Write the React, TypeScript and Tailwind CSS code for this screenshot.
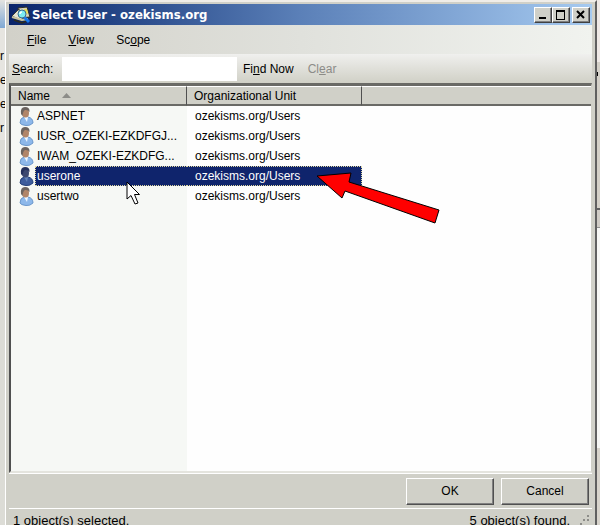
import type { ReactNode } from 'react';

interface DirectoryObject {
  name: string;
  unit: string;
}

const objects: DirectoryObject[] = [
  { name: 'ASPNET', unit: 'ozekisms.org/Users' },
  { name: 'IUSR_OZEKI-EZKDFGJ...', unit: 'ozekisms.org/Users' },
  { name: 'IWAM_OZEKI-EZKDFG...', unit: 'ozekisms.org/Users' },
  { name: 'userone', unit: 'ozekisms.org/Users' },
  { name: 'usertwo', unit: 'ozekisms.org/Users' },
];

const selected = 'userone';

function DirectoryIcon() {
  return (
    <svg width="20" height="18" viewBox="0 0 20 18" aria-hidden="true">
      <path d="M7 2 L16 1 L19 11 L8 12 Z" fill="#d6d4bc" stroke="#2c2c24" />
      <path d="M13 3 L16 3 L17 8 L14 7 Z" fill="#e8dc50" />
      <path d="M1 10 L8 3 L9 11 L13 13 L11 15 Z" fill="#e4e4d4" stroke="#3c3c34" />
      <path d="M1 11 L11 14 L17 13" stroke="#c8c4a0" strokeWidth="2" fill="none" />
      <path d="M3 14 L11 17 L16 15" stroke="#2c2c20" strokeWidth="1.5" fill="none" />
      <path d="M13 11 L18 16" stroke="#1878f0" strokeWidth="3" />
      <circle cx="11" cy="8" r="4" fill="#7cecf4" stroke="#3a6c90" />
      <path d="M9 8 Q9 6 11 6" stroke="#fff" strokeWidth="1.5" fill="none" />
    </svg>
  );
}

function UserIcon({ dark }: { dark: boolean }) {
  return (
    <svg width="16" height="19" viewBox="0 0 16 19" aria-hidden="true" className="shrink-0">
      <path
        d="M1 16 Q1 11 5 10 L9 10 Q14 11 14 16 Q11 19 7 18.500 Q2 18 1 16 Z"
        fill={dark ? '#3d5c9c' : '#8db8ea'}
        stroke={dark ? '#24407c' : '#6c98cc'}
      />
      <path d="M5 10 L8 15 L9 10 Z" fill={dark ? '#6484b8' : '#eef6ff'} />
      <ellipse cx="6.5" cy="6" rx="3.5" ry="4.5" fill={dark ? '#3c4870' : '#b08468'} />
      <path
        d="M2 7 Q1 0 6 0 Q11 0 10.500 5 Q9 2.500 6 3 Q4 4 3.500 9 Z"
        fill={dark ? '#24305c' : '#6c6460'}
      />
    </svg>
  );
}

function CaptionButton({ label, children }: { label: string; children: ReactNode }) {
  return (
    <button
      type="button"
      aria-label={label}
      className="flex h-4 w-[18px] items-center justify-center border border-t-white border-r-[#404040] border-b-[#404040] border-l-white bg-[#d0d0c8] shadow-[inset_-1px_-1px_0_#808080]"
    >
      <svg width="12" height="12" viewBox="0 0 12 12" fill="none" stroke="#000" shapeRendering="crispEdges">
        {children}
      </svg>
    </button>
  );
}

function DialogButton({ children }: { children: ReactNode }) {
  return (
    <button
      type="button"
      className="h-[27px] w-[88px] border border-t-white border-r-[#505050] border-b-[#505050] border-l-white bg-[#d0d0c8] shadow-[inset_-1px_-1px_0_#808080]"
    >
      {children}
    </button>
  );
}

function BackgroundLeft() {
  return (
    <div className="w-[5px] shrink-0 overflow-hidden bg-[#dcdcd6]" aria-hidden="true">
      <div className="h-7 bg-linear-to-b from-[#e4e4e0] to-[#7fa8d4]" />
      <div className="flex flex-col bg-[#e6e5e0] pt-4 leading-6">
        <span>r</span>
        <span>e</span>
        <span>e</span>
        <span>r</span>
      </div>
    </div>
  );
}

function BackgroundRight() {
  return (
    <div className="flex w-[3px] shrink-0 flex-col bg-[#f6f6f4]" aria-hidden="true">
      <div className="h-[62px] bg-[#efe9e6]" />
      <div className="h-[146px] bg-[#d4d0c8] pt-2.5">
        <div className="h-1 w-px bg-black" />
      </div>
      <div className="h-5 border-t-2 border-b border-t-[#606060] border-b-[#909090] bg-[#d0ccc6]" />
      <div className="flex-1" />
      <div className="h-[77px] bg-[#d8d4cc]" />
    </div>
  );
}

export default function App() {
  return (
    <div className="flex h-screen overflow-hidden bg-[#d0d0c8] font-['Liberation_Sans',sans-serif] text-xs text-black">
      <BackgroundLeft />
      <main className="relative flex min-w-0 flex-1 flex-col border-t-2 border-r-2 border-l border-t-[#f0ede8] border-r-[#606060] border-l-white bg-[#d0d0c8] pt-0.5 pr-[3px] pl-[3px]">
        <header className="flex h-[21px] shrink-0 items-center bg-linear-to-r from-[#0a246a] via-[#5b80b8] to-[#a6caf0] pr-0.5 pl-0.5">
          <DirectoryIcon />
          <h1 className="flex-1 pl-px font-['DejaVu_Sans_Condensed','DejaVu_Sans',sans-serif] text-[13px] font-bold text-white">
            Select User - ozekisms.org
          </h1>
          <div className="flex">
            <CaptionButton label="Minimize">
              <path d="M2 9h7" strokeWidth="2" />
            </CaptionButton>
            <CaptionButton label="Maximize">
              <path d="M1.500 1v9.500h8V1" />
              <path d="M1 2h9" strokeWidth="2" />
            </CaptionButton>
          </div>
          <div className="pl-0.5">
            <CaptionButton label="Close">
              <path d="M2 2l7 7M9 2l-7 7" strokeWidth="2" shapeRendering="auto" />
            </CaptionButton>
          </div>
        </header>

        <nav className="flex h-[29px] shrink-0 items-center gap-[22px] bg-linear-to-r from-[#d2d1c9] via-[#e0e1dc] to-[#f1f3ef] pl-[18px]">
          <button type="button"><u>F</u>ile</button>
          <button type="button"><u>V</u>iew</button>
          <button type="button">Sc<u>o</u>pe</button>
        </nav>

        <form className="flex h-[29px] shrink-0 items-center bg-linear-to-b from-[#f0f0ee] to-[#d0d0c6] pl-[3px]">
          <label htmlFor="search" className="w-[50px]"><u>S</u>earch:</label>
          <input id="search" type="text" className="h-6 w-[175px] bg-white px-1 outline-none" />
          <button type="button" className="ml-1.5">Fi<u>n</u>d Now</button>
          <button type="button" disabled className="ml-3.5 text-[#8c8c88]">Cl<u>e</u>ar</button>
        </form>

        <section className="min-h-0 flex-1 border-t-[3px] border-r border-b-2 border-l-2 border-t-[#6a6a66] border-r-[#d0d0c8] border-b-[#e4e4de] border-l-[#505050] bg-[linear-gradient(to_right,#f6f8f5_176px,#fefefe_176px)]">
          <table className="w-full table-fixed border-separate border-spacing-0 text-left">
            <colgroup>
              <col className="w-[176px]" />
              <col className="w-[175px]" />
              <col />
            </colgroup>
            <thead>
              <tr className="h-5 bg-[#d0d0c8]">
                <th className="border-t border-r border-b-2 border-t-white border-r-[#505050] border-b-[#6a6a66] p-0 pl-[7px] font-normal">
                  <span className="flex items-center gap-3">
                    Name
                    <svg width="9" height="5" viewBox="0 0 9 5" aria-hidden="true">
                      <path d="M0 5 L4.500 0 L9 5 Z" fill="#8c8c88" />
                    </svg>
                  </span>
                </th>
                <th className="border-t border-r border-b-2 border-t-white border-r-[#505050] border-b-[#6a6a66] p-0 pl-[7px] font-normal">
                  Organizational Unit
                </th>
                <th className="border-t border-b-2 border-t-white border-b-[#6a6a66] p-0" />
              </tr>
            </thead>
            <tbody>
              {objects.map(({ name, unit }) => {
                const active = name === selected;
                return (
                  <tr key={name} className="h-5" aria-selected={active}>
                    <td className="p-0">
                      <div className="flex h-5 items-center pl-2">
                        <UserIcon dark={active} />
                        <span
                          className={
                            active
                              ? 'flex-1 border-y border-l border-dotted border-[#e0d8a0] bg-[#0f246c] pl-px leading-[18px] text-white'
                              : 'flex-1 pl-0.5 leading-5 whitespace-nowrap'
                          }
                        >
                          {name}
                        </span>
                      </div>
                    </td>
                    <td className="p-0">
                      <div
                        className={
                          active
                            ? 'border-y border-r border-dotted border-[#e0d8a0] bg-[#0f246c] pl-2 leading-[18px] text-white'
                            : 'pl-2 leading-5'
                        }
                      >
                        {unit}
                      </div>
                    </td>
                    <td className="p-0" />
                  </tr>
                );
              })}
            </tbody>
          </table>
        </section>

        <div className="flex h-[35px] shrink-0 items-center justify-end gap-[7px] border-t border-white pr-[3px]">
          <DialogButton>OK</DialogButton>
          <DialogButton>Cancel</DialogButton>
        </div>

        <footer className="flex h-[17px] shrink-0 justify-between border-t border-white pt-1 pr-0.5 pl-1 text-[13px] leading-4">
          <span>1 object(s) selected.</span>
          <span className="flex gap-2.5">
            5 object(s) found.
            <svg width="10" height="12" viewBox="0 0 10 12" fill="#8c8c88" aria-hidden="true">
              <path d="M7 2h2v2h-2z M3 6h2v2h-2z M7 6h2v2h-2z M0 10h2v2h-2z" />
            </svg>
          </span>
        </footer>

        <svg
          className="absolute top-[170px] left-[310px]"
          width="126"
          height="56"
          viewBox="0 0 126 56"
          aria-hidden="true"
        >
          <path d="M1 4 L35 1 L33 10 L123 38 L119 51 L29 19 L26 26 Z" fill="#ff0000" stroke="#000" />
        </svg>
        <svg
          className="absolute top-[179px] left-[120px]"
          width="16"
          height="26"
          viewBox="0 0 16 26"
          aria-hidden="true"
        >
          <path
            d="M1 1 L1 18 L5 14.500 L9 23 L12 22 L8.500 13.500 L13.500 13.500 Z"
            fill="#fff"
            stroke="#000"
          />
        </svg>
      </main>
      <BackgroundRight />
    </div>
  );
}
